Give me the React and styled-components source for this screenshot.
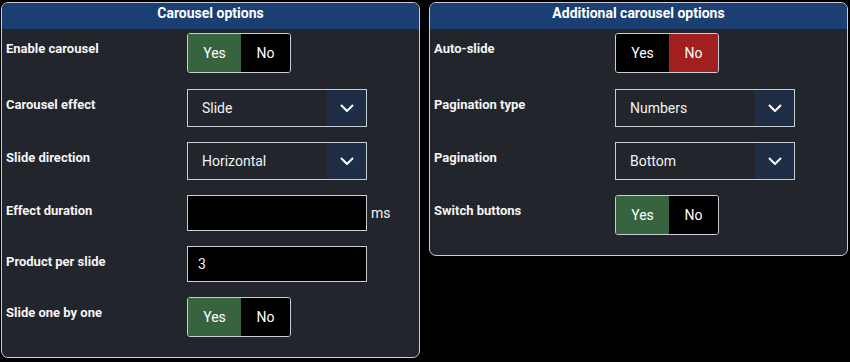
import React from 'react';
import styled, { createGlobalStyle } from 'styled-components';

const GlobalStyle = createGlobalStyle`
  body {
    margin: 0;
    background: #000000;
    font-family: Roboto, "Liberation Sans", Arial, sans-serif;
  }
`;

const Page = styled.div`
  display: flex;
  align-items: flex-start;
  gap: 9px;
  padding: 2px 0 0 1px;
`;

const Panel = styled.section`
  width: 419px;
  box-sizing: border-box;
  border: 1px solid #c9cdd3;
  border-radius: 7px;
  background: #22252b;
  overflow: hidden;
`;

const Header = styled.div`
  background: #1b3f73;
  color: #ffffff;
  font-size: 14px;
  font-weight: bold;
  line-height: 18px;
  text-align: center;
  padding: 1px 0 7px;
`;

const Body = styled.div`
  display: flex;
  flex-direction: column;
  gap: 15px;
  padding: 4px 4px 19px;
`;

const Row = styled.div`
  display: grid;
  grid-template-columns: 181px auto;
  align-items: start;
`;

const Label = styled.div`
  color: #f4f4f4;
  font-size: 13px;
  font-weight: bold;
  line-height: 15px;
  padding-top: 8px;
`;

const Control = styled.div`
  display: flex;
  align-items: center;
`;

const Toggle = styled.div`
  display: flex;
  box-sizing: border-box;
  width: 104px;
  height: 40px;
  margin-bottom: 1px;
  border: 1px solid #c9cdd3;
  border-radius: 3px;
  overflow: hidden;
`;

const Segment = styled.div`
  width: ${(p) => p.$w}px;
  display: flex;
  align-items: center;
  justify-content: center;
  color: #ffffff;
  font-size: 14px;
  background: ${(p) => p.$bg};
`;

const Select = styled.div`
  display: flex;
  box-sizing: border-box;
  width: 180px;
  height: 38px;
  border: 1px solid #c9cdd3;
  background: #22252b;
`;

const SelectValue = styled.div`
  flex: 1;
  display: flex;
  align-items: center;
  padding-left: 14px;
  color: #f2f2f2;
  font-size: 14px;
`;

const Arrow = styled.div`
  width: 39px;
  display: flex;
  align-items: center;
  justify-content: center;
  background: #1f2d45;
`;

const Input = styled.div`
  box-sizing: border-box;
  width: 180px;
  height: 36px;
  border: 1px solid #c9cdd3;
  background: #000000;
  color: #f2f2f2;
  font-size: 14px;
  display: flex;
  align-items: center;
  padding-left: 10px;
`;

const Unit = styled.span`
  color: #f2f2f2;
  font-size: 14px;
  margin-left: 4px;
`;

const GREEN = '#38633f';
const RED = '#a21f20';
const BLACK = '#000000';

function YesNo({ yes }) {
  return (
    <Toggle>
      <Segment $w={53} $bg={yes ? GREEN : BLACK}>Yes</Segment>
      <Segment $w={49} $bg={yes ? BLACK : RED}>No</Segment>
    </Toggle>
  );
}

function Dropdown({ value }) {
  return (
    <Select>
      <SelectValue>{value}</SelectValue>
      <Arrow>
        <svg width="14" height="8" viewBox="0 0 14 8">
          <polyline points="1,1 7,7 13,1" fill="none" stroke="#ffffff" strokeWidth="2" />
        </svg>
      </Arrow>
    </Select>
  );
}

function Field({ label, children }) {
  return (
    <Row>
      <Label>{label}</Label>
      <Control>{children}</Control>
    </Row>
  );
}

export default function App() {
  return (
    <>
      <GlobalStyle />
      <Page>
        <Panel>
          <Header>Carousel options</Header>
          <Body>
            <Field label="Enable carousel"><YesNo yes /></Field>
            <Field label="Carousel effect"><Dropdown value="Slide" /></Field>
            <Field label="Slide direction"><Dropdown value="Horizontal" /></Field>
            <Field label="Effect duration">
              <Input />
              <Unit>ms</Unit>
            </Field>
            <Field label="Product per slide"><Input>3</Input></Field>
            <Field label="Slide one by one"><YesNo yes /></Field>
          </Body>
        </Panel>
        <Panel>
          <Header>Additional carousel options</Header>
          <Body>
            <Field label="Auto-slide"><YesNo yes={false} /></Field>
            <Field label="Pagination type"><Dropdown value="Numbers" /></Field>
            <Field label="Pagination"><Dropdown value="Bottom" /></Field>
            <Field label="Switch buttons"><YesNo yes /></Field>
          </Body>
        </Panel>
      </Page>
    </>
  );
}
